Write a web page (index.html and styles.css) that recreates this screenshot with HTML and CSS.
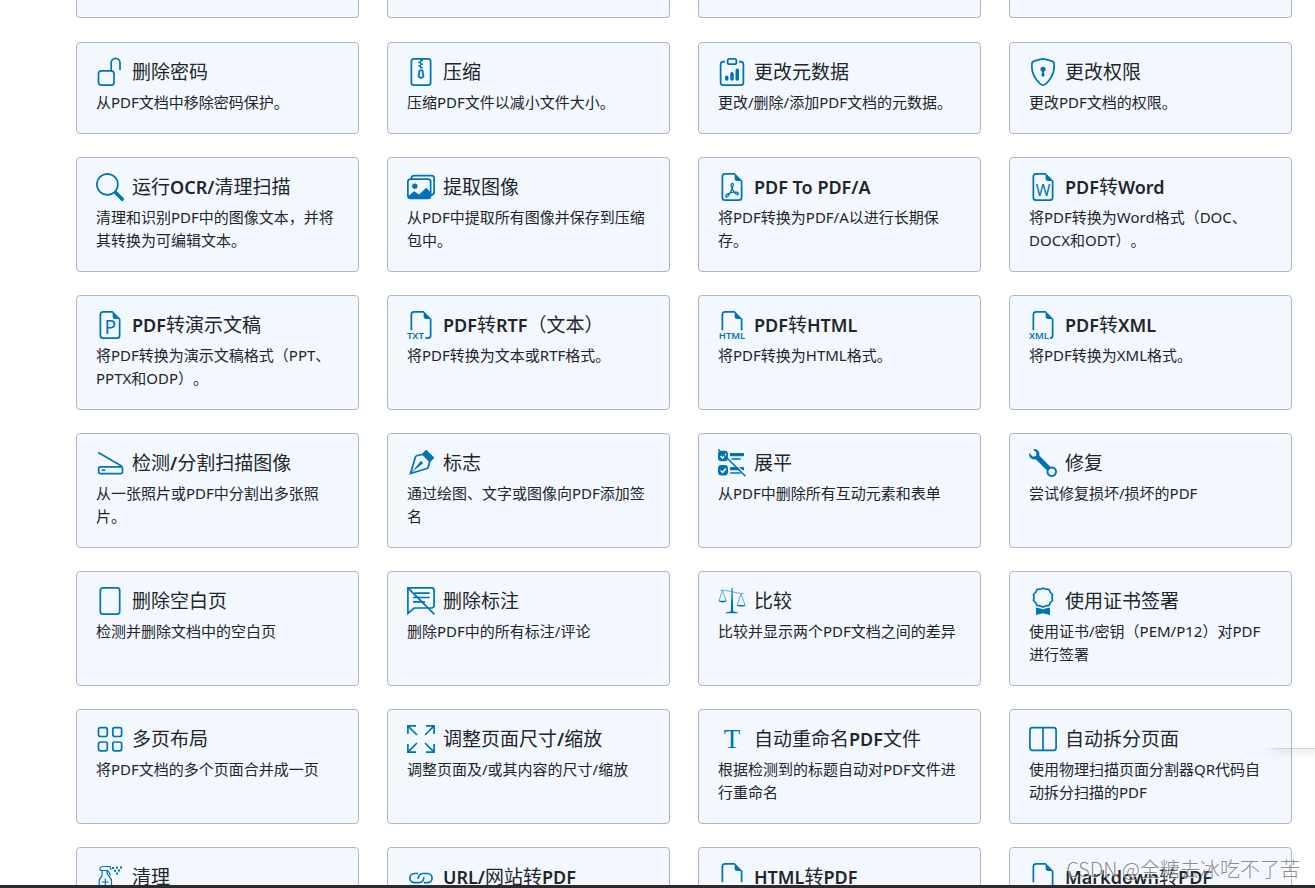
FILE: index.html
```
<!DOCTYPE html>
<html lang="zh-CN">
<head>
<meta charset="utf-8">
<meta name="viewport" content="width=device-width, initial-scale=1">
<title>PDF 工具</title>
<link rel="stylesheet" href="styles.css">
</head>
<body>
<svg class="sprite" aria-hidden="true">
  <symbol id="earmark" viewBox="0 0 16 16"><path d="M14 14V4.5L9.5 0H4a2 2 0 0 0-2 2v12a2 2 0 0 0 2 2h8a2 2 0 0 0 2-2M9.5 3A1.5 1.5 0 0 0 11 4.5h2V14a1 1 0 0 1-1 1H4a1 1 0 0 1-1-1V2a1 1 0 0 1 1-1h5.5z"/></symbol>
  <symbol id="filetype" viewBox="0 0 16 16"><path d="M14 4.5V14a2 2 0 0 1-2 2h-1.500v-1H12a1 1 0 0 0 1-1V4.5h-2A1.5 1.5 0 0 1 9.5 3V1H4a1 1 0 0 0-1 1v9H2V2a2 2 0 0 1 2-2h5.5z"/></symbol>
  <symbol id="filetype-xml" viewBox="0 0 16 16"><path d="M14 4.5V14a2 2 0 0 1-2 2v-1a1 1 0 0 0 1-1V4.5h-2A1.5 1.5 0 0 1 9.5 3V1H4a1 1 0 0 0-1 1v9H2V2a2 2 0 0 1 2-2h5.5z"/></symbol>
  <symbol id="filetype-wide" viewBox="0 0 16 16"><path d="M14 4.5V11h-1V4.5h-2A1.5 1.5 0 0 1 9.5 3V1H4a1 1 0 0 0-1 1v9H2V2a2 2 0 0 1 2-2h5.5z"/></symbol>
</svg>
<main class="page">
  <div class="features peek" aria-hidden="true">
    <div class="stub"></div><div class="stub"></div><div class="stub"></div><div class="stub"></div>
  </div>
  <div class="features">

    <a class="card" href="#">
      <div class="head"><svg class="icon line" viewBox="0 0 28 28"><rect x="2.5" y="12.8" width="15.5" height="14.4" rx="3"/><path d="M15.2 12.8V4.8a4.4 4.4 0 0 1 8.8 0V12"/></svg><h2>删除密码</h2></div>
      <p>从PDF文档中移除密码保护。</p>
    </a>
    <a class="card" href="#">
      <div class="head"><svg class="icon" viewBox="0 0 16 16"><path d="M6.5 7.5a1 1 0 0 1 1-1h1a1 1 0 0 1 1 1v.938l.4 1.599a1 1 0 0 1-.416 1.074l-.93.62a1 1 0 0 1-1.109 0l-.93-.62a1 1 0 0 1-.415-1.074l.4-1.599zm2 0h-1v.938a1 1 0 0 1-.03.243l-.4 1.598.93.62.93-.62-.4-1.598a1 1 0 0 1-.03-.243z"/><path d="M2 2a2 2 0 0 1 2-2h8a2 2 0 0 1 2 2v12a2 2 0 0 1-2 2H4a2 2 0 0 1-2-2zm5.500-1H4a1 1 0 0 0-1 1v12a1 1 0 0 0 1 1h8a1 1 0 0 0 1-1V2a1 1 0 0 0-1-1H9v1H8v1h1v1H8v1h1v1H7.500V5h-1V4h1V3h-1V2h1z"/></svg><h2>压缩</h2></div>
      <p>压缩PDF文件以减小文件大小。</p>
    </a>
    <a class="card" href="#">
      <div class="head"><svg class="icon" viewBox="0 0 16 16"><path d="M4 11a1 1 0 1 1 2 0v1a1 1 0 1 1-2 0zm6-4a1 1 0 1 1 2 0v5a1 1 0 1 1-2 0zM7 9a1 1 0 0 1 2 0v3a1 1 0 1 1-2 0z"/><path d="M4 1.500H3a2 2 0 0 0-2 2V14a2 2 0 0 0 2 2h10a2 2 0 0 0 2-2V3.500a2 2 0 0 0-2-2h-1v1h1a1 1 0 0 1 1 1V14a1 1 0 0 1-1 1H3a1 1 0 0 1-1-1V3.500a1 1 0 0 1 1-1h1z"/><path d="M9.500 1a.5.5 0 0 1 .5.5v1a.5.5 0 0 1-.5.5h-3a.5.5 0 0 1-.5-.5v-1a.5.5 0 0 1 .5-.5zm-3-1A1.500 1.500 0 0 0 5 1.500v1A1.500 1.500 0 0 0 6.500 4h3A1.500 1.500 0 0 0 11 2.500v-1A1.500 1.500 0 0 0 9.500 0z"/></svg><h2>更改元数据</h2></div>
      <p>更改/删除/添加PDF文档的元数据。</p>
    </a>
    <a class="card" href="#">
      <div class="head"><svg class="icon" viewBox="0 0 16 16"><path class="outline" d="M8 .55c1.200 0 4 .9 5.700 1.500.3.1.5.3.55.65.6 4.300-.8 7.500-2.400 9.600C10.400 14.200 8.800 15.500 8 15.500s-2.400-1.300-3.850-3.200c-1.600-2.100-3-5.300-2.400-9.600.05-.35.25-.55.55-.65C4 1.450 6.800.55 8 .55z"/><path d="M9.500 6.500a1.500 1.500 0 0 1-1 1.415l.385 1.990a.5.5 0 0 1-.491.595h-.788a.5.5 0 0 1-.49-.595l.384-1.990a1.500 1.500 0 1 1 2-1.415"/></svg><h2>更改权限</h2></div>
      <p>更改PDF文档的权限。</p>
    </a>

    <a class="card" href="#">
      <div class="head"><svg class="icon" viewBox="0 0 16 16"><path d="M11.742 10.344a6.500 6.500 0 1 0-1.397 1.398h-.001q.044.06.098.115l3.850 3.850a1 1 0 0 0 1.415-1.414l-3.850-3.850a1 1 0 0 0-.115-.1zM12 6.500a5.500 5.500 0 1 1-11 0 5.500 5.500 0 0 1 11 0"/></svg><h2>运行<b>OCR/</b>清理扫描</h2></div>
      <p>清理和识别PDF中的图像文本，并将其转换为可编辑文本。</p>
    </a>
    <a class="card" href="#">
      <div class="head"><svg class="icon" viewBox="0 0 16 16"><path d="M4.502 9a1.500 1.500 0 1 0 0-3 1.500 1.500 0 0 0 0 3"/><path d="M14.002 13a2 2 0 0 1-2 2h-10a2 2 0 0 1-2-2V5A2 2 0 0 1 2 3a2 2 0 0 1 2-2h10a2 2 0 0 1 2 2v8a2 2 0 0 1-1.998 2M14 2H4a1 1 0 0 0-1 1h9.002a2 2 0 0 1 2 2v7A1 1 0 0 0 15 11V3a1 1 0 0 0-1-1M2.002 4a1 1 0 0 0-1 1v8l2.646-2.354a.5.5 0 0 1 .63-.062l2.660 1.773 3.710-3.710a.5.5 0 0 1 .577-.094l1.777 1.947V5a1 1 0 0 0-1-1z"/></svg><h2>提取图像</h2></div>
      <p>从PDF中提取所有图像并保存到压缩包中。</p>
    </a>
    <a class="card" href="#">
      <div class="head"><svg class="icon" viewBox="0 0 16 16"><use href="#earmark"/><path d="M4.603 14.087a.8.8 0 0 1-.438-.42c-.195-.388-.13-.776.08-1.102.198-.307.526-.568.897-.787a7.700 7.700 0 0 1 1.482-.645 20 20 0 0 0 1.062-2.227 7.300 7.300 0 0 1-.43-1.295c-.086-.4-.119-.796-.046-1.136.075-.354.274-.672.65-.823.192-.077.4-.12.602-.077a.7.7 0 0 1 .477.365c.088.164.12.356.127.538.007.188-.012.396-.047.614-.084.51-.27 1.134-.52 1.794a11 11 0 0 0 .98 1.686 5.800 5.800 0 0 1 1.334.05c.364.066.734.195.96.465.12.144.193.32.2.518.007.192-.047.382-.138.563a1.040 1.040 0 0 1-.354.416.86.86 0 0 1-.51.138c-.331-.014-.654-.196-.933-.417a5.700 5.700 0 0 1-.911-.95 11.700 11.700 0 0 0-1.997.406 11.300 11.300 0 0 1-1.020 1.510c-.292.35-.609.656-.927.787a.8.8 0 0 1-.58.029m1.379-1.901q-.25.115-.459.238c-.328.194-.541.383-.647.547-.094.145-.096.25-.04.361q.016.032.026.044l.035-.012c.137-.056.355-.235.635-.572a8 8 0 0 0 .45-.606m1.640-1.330a13 13 0 0 1 1.010-.193 12 12 0 0 1-.51-.858 21 21 0 0 1-.5 1.050zm2.446.45q.226.245.435.41c.24.19.407.253.498.256a.1.1 0 0 0 .07-.015.3.3 0 0 0 .094-.125.44.44 0 0 0 .059-.2.1.1 0 0 0-.026-.063c-.052-.062-.2-.152-.518-.209a4 4 0 0 0-.612-.053zM8.078 7.800a7 7 0 0 0 .2-.828q.046-.282.038-.465a.6.6 0 0 0-.032-.198.5.5 0 0 0-.145.04c-.087.035-.158.106-.196.283-.04.192-.03.469.046.822q.036.167.09.346z"/></svg><h2><b>PDF To PDF/A</b></h2></div>
      <p>将PDF转换为PDF/A以进行长期保存。</p>
    </a>
    <a class="card" href="#">
      <div class="head"><svg class="icon" viewBox="0 0 16 16"><use href="#earmark"/><text class="letter" x="8" y="13.4" text-anchor="middle">W</text></svg><h2><b>PDF</b>转<b>Word</b></h2></div>
      <p>将PDF转换为Word格式（DOC、DOCX和ODT）。</p>
    </a>

    <a class="card" href="#">
      <div class="head"><svg class="icon" viewBox="0 0 16 16"><use href="#earmark"/><text class="letter tall" x="8.2" y="13.4" text-anchor="middle">P</text></svg><h2><b>PDF</b>转演示文稿</h2></div>
      <p>将PDF转换为演示文稿格式（PPT、PPTX和ODP）。</p>
    </a>
    <a class="card" href="#">
      <div class="head"><svg class="icon" viewBox="0 0 16 16"><use href="#filetype"/><text class="label" x="0" y="15.900">TXT</text></svg><h2><b>PDF</b>转<b>RTF</b>（文本）</h2></div>
      <p>将PDF转换为文本或RTF格式。</p>
    </a>
    <a class="card" href="#">
      <div class="head"><svg class="icon" viewBox="0 0 16 16"><use href="#filetype-wide"/><text class="label" x="8" y="15.900" text-anchor="middle">HTML</text></svg><h2><b>PDF</b>转<b>HTML</b></h2></div>
      <p>将PDF转换为HTML格式。</p>
    </a>
    <a class="card" href="#">
      <div class="head"><svg class="icon" viewBox="0 0 16 16"><use href="#filetype-xml"/><text class="label" x="0" y="15.900">XML</text></svg><h2><b>PDF</b>转<b>XML</b></h2></div>
      <p>将PDF转换为XML格式。</p>
    </a>

    <a class="card" href="#">
      <div class="head"><svg class="icon line" viewBox="0 0 28 28"><path d="M2.200 3.600L26 17.200"/><rect x="2.700" y="17.800" width="23.800" height="6.800" rx="1.600"/><path d="M5.800 21.200h3.400"/></svg><h2>检测<b>/</b>分割扫描图像</h2></div>
      <p>从一张照片或PDF中分割出多张照片。</p>
    </a>
    <a class="card" href="#">
      <div class="head"><svg class="icon" viewBox="0 0 16 16"><path d="M10.646.646a.5.5 0 0 1 .708 0l4 4a.5.5 0 0 1 0 .708l-1.902 1.902-.829 3.313a1.500 1.500 0 0 1-1.024 1.073L1.254 14.746 4.358 4.400A1.500 1.500 0 0 1 5.430 3.377l3.313-.828zm-1.800 2.908-3.173.793a.5.5 0 0 0-.358.342l-2.570 8.565 8.567-2.570a.5.5 0 0 0 .34-.357l.794-3.174z"/><path d="M2.832 13.228 8 9a1 1 0 1 0-1-1l-4.228 5.168-.026.086z"/></svg><h2>标志</h2></div>
      <p>通过绘图、文字或图像向PDF添加签名</p>
    </a>
    <a class="card" href="#">
      <div class="head"><svg class="icon" viewBox="0 0 28 28"><rect x="0" y="1.700" width="10" height="10.500" rx="3.400"/><rect x="0" y="16" width="10" height="10.500" rx="3.400"/><path class="tick" d="M2.600 7.200l2 1.900 3.300-4M2.600 21.500l2 1.900 3.300-4"/><rect x="12" y="4" width="14" height="3.300" rx=".8"/><rect x="13" y="9.300" width="10" height="1.500" rx=".7"/><rect x="12" y="18" width="14" height="3.300" rx=".8"/><rect x="12" y="23.300" width="11" height="1.500" rx=".7"/><path class="gap" d="M10 7.800L28 25.600"/><path class="outline-px" d="M.3.5L27.500 27.300"/></svg><h2>展平</h2></div>
      <p>从PDF中删除所有互动元素和表单</p>
    </a>
    <a class="card" href="#">
      <div class="head"><svg class="icon" viewBox="0 0 16 16"><path d="M.102 2.223A3.004 3.004 0 0 0 3.780 5.897l6.341 6.252A3.003 3.003 0 0 0 13 16a3 3 0 1 0-.851-5.878L5.897 3.781A3.004 3.004 0 0 0 2.223.1l2.141 2.142L4 4l-1.757.364zm13.370 9.019.528.026.287.445.445.287.026.529L15 13l-.242.471-.026.529-.445.287-.287.445-.529.026L13 15l-.471-.242-.529-.026-.287-.445-.445-.287-.026-.529L11 13l.242-.471.026-.529.445-.287.287-.445.529-.026L13 11z"/></svg><h2>修复</h2></div>
      <p>尝试修复损坏/损坏的PDF</p>
    </a>

    <a class="card" href="#">
      <div class="head"><svg class="icon line" viewBox="0 0 28 28"><rect x="4.300" y=".9" width="19.400" height="26.200" rx="2.600"/></svg><h2>删除空白页</h2></div>
      <p>检测并删除文档中的空白页</p>
    </a>
    <a class="card" href="#">
      <div class="head"><svg class="icon line" viewBox="0 0 28 28"><path d="M.9.900H24.600a2.500 2.500 0 0 1 2.500 2.500V18.500a2.500 2.500 0 0 1-2.500 2.500H7.200L.9 26.300zM7.500 6.200h15.200M6 10.500h16.700M6 14.800h12M.9.900l26.500 26.500"/></svg><h2>删除标注</h2></div>
      <p>删除PDF中的所有标注/评论</p>
    </a>
    <a class="card" href="#">
      <div class="head"><svg class="icon thin" viewBox="0 0 28 28"><path d="M2.500 3.400C8 2.200 18 6.800 25.600 6.400"/><path d="M4.500 3.500L.9 14M4.500 3.500L8.300 14M23 7l-3.800 11M23 7l4 11"/><path class="solid" d="M.5 13.800h8.300c-.5 2.100-7.800 2.100-8.300 0zM18.800 18h8.800c-.5 2.100-8.300 2.100-8.800 0zM13.600 2.500a.8.800 0 1 1 1 0L15.300 24.500c2 .3 4.600.5 4.900 1.700H7.500c.3-1.200 3-1.400 5.300-1.700z"/></svg><h2>比较</h2></div>
      <p>比较并显示两个PDF文档之间的差异</p>
    </a>
    <a class="card" href="#">
      <div class="head"><svg class="icon line" viewBox="0 0 28 28"><path d="M14 1.200l2.900 1 3.100.3 1.300 2.800 2.200 2.200-.5 3 .5 3-2.200 2.200-1.300 2.700-3.100.4-2.900 1.200-2.900-1.200-3.100-.4-1.300-2.700-2.200-2.200.5-3-.5-3 2.200-2.200L8 2.500l3.100-.3z"/><path class="solid" d="M7 20.500l4.500 1.100 2.500 1 2.500-1 4.500-1.100V28l-7-1.800L7 28z"/></svg><h2>使用证书签署</h2></div>
      <p>使用证书/密钥（PEM/P12）对PDF进行签署</p>
    </a>

    <a class="card" href="#">
      <div class="head"><svg class="icon line" viewBox="0 0 28 28"><rect x="2.500" y="2.700" width="8.800" height="8.800" rx="2"/><rect x="16.800" y="2.700" width="8.800" height="8.800" rx="2"/><rect x="2.500" y="17" width="8.800" height="8.800" rx="2"/><rect x="16.800" y="17" width="8.800" height="8.800" rx="2"/></svg><h2>多页布局</h2></div>
      <p>将PDF文档的多个页面合并成一页</p>
    </a>
    <a class="card" href="#">
      <div class="head"><svg class="icon line" viewBox="0 0 28 28"><path d="M9 .9H.9V9M.9.900L10 10M19 .9h8.100V9M27.100.900L18 10M9 27.100H.9V19M.9 27.100L10 18M19 27.100h8.100V19M27.100 27.100L18 18"/></svg><h2>调整页面尺寸<b>/</b>缩放</h2></div>
      <p>调整页面及/或其内容的尺寸/缩放</p>
    </a>
    <a class="card" href="#">
      <div class="head"><svg class="icon" viewBox="0 0 28 28"><text class="serif" x="14" y="23" text-anchor="middle">T</text></svg><h2>自动重命名<b>PDF</b>文件</h2></div>
      <p>根据检测到的标题自动对PDF文件进行重命名</p>
    </a>
    <a class="card" href="#">
      <div class="head"><svg class="icon line" viewBox="0 0 28 28"><rect x=".9" y="2.600" width="26.200" height="22.800" rx="2.600"/><path d="M14 2.600v22.800"/></svg><h2>自动拆分页面</h2></div>
      <p>使用物理扫描页面分割器QR代码自动拆分扫描的PDF</p>
    </a>

    <a class="card" href="#">
      <div class="head"><svg class="icon spray" viewBox="0 0 28 28"><path d="M4 7.500V5.200C4.500 4 6 3.500 8 3.500h6l1.200 3.200M4 7.500h7.500c1.500 1.300 2.500 3 3 5M6 7.500V13c-1.300 1.500-2.800 2.600-2.800 5v9.500h12.300V18c0-2.400-1.500-3.500-2.800-5M11 7.500V10l1.700 3M9.300 15.500v7M5.800 19h7"/><path class="solid" d="M16 4h2v2h-2zM20 3.500h2v2h-2zM24 3.500h2v2h-2zM18 6.800h2v2h-2zM22 6.500h2v2h-2zM20 9.500h2v2h-2z"/></svg><h2>清理</h2></div>
    </a>
    <a class="card" href="#">
      <div class="head"><svg class="icon line" viewBox="0 0 28 28"><path d="M11 10.500H7.500a4.600 4.600 0 0 0 0 9.200h4.700a4.600 4.600 0 0 0 4.500-5.500M17 19.700h3.500a4.600 4.600 0 0 0 0-9.200h-4.700a4.600 4.600 0 0 0-4.500 5.500"/></svg><h2><b>URL/</b>网站转<b>PDF</b></h2></div>
    </a>
    <a class="card" href="#">
      <div class="head"><svg class="icon" viewBox="0 0 16 16"><use href="#filetype-wide"/><text class="label" x="8" y="15.900" text-anchor="middle">HTML</text></svg><h2><b>HTML</b>转<b>PDF</b></h2></div>
    </a>
    <a class="card" href="#">
      <div class="head"><svg class="icon" viewBox="0 0 16 16"><use href="#filetype"/><text class="label" x="0" y="15.900">MD</text></svg><h2><b>Markdown</b>转<b>PDF</b></h2></div>
    </a>
  </div>
  <div class="edge-shadow"></div>
  <div class="watermark">CSDN @全糖去冰吃不了苦</div>
  <div class="bottom-bar"></div>
</main>
</body>
</html>
```
FILE: styles.css
```
* {
  box-sizing: border-box;
}

body {
  margin: 0;
  background: #fff;
  color: #212529;
  font: 15px/23px "Noto Sans", "Noto Sans CJK SC", sans-serif;
  text-spacing-trim: space-all;
}

.sprite {
  display: none;
}

.page {
  position: relative;
  height: 100vh;
  overflow: hidden;
}

.features {
  display: grid;
  grid-template-columns: repeat(4, minmax(0, 1fr));
  gap: 23px 28px;
  padding: 0 23px 0 76px;
}

.peek {
  margin-bottom: 24px;
}

.stub {
  height: 18px;
  border: 1px solid #b0b6c3;
  border-top: 0;
  border-radius: 0 0 4px 4px;
  background: #f3f8ff;
}

.card {
  min-height: 92px;
  padding: 15px 19px 19px;
  border: 1px solid #b0b6c3;
  border-radius: 4px;
  background: #f3f8ff;
  color: inherit;
  text-decoration: none;
}

.head {
  display: flex;
  align-items: center;
  gap: 8px;
  height: 28px;
  margin-bottom: 5px;
}

.head h2 {
  margin: 0;
  font-size: 19px;
  line-height: 28px;
  font-weight: 400;
  white-space: nowrap;
}

.head b {
  font-size: 18px;
  font-weight: 600;
}

.card p {
  margin: 0;
}

.icon {
  flex: none;
  width: 28px;
  height: 28px;
  fill: #0073b7;
  overflow: visible;
}

.line {
  fill: none;
  stroke: #0073b7;
  stroke-width: 1.7;
}

.thin,
.spray {
  fill: none;
  stroke: #0073b7;
  stroke-width: 0.6;
}

.spray {
  stroke-width: 1.2;
}

.solid {
  fill: #0073b7;
  stroke: none;
}

.outline {
  fill: none;
  stroke: #0073b7;
  stroke-width: 1;
}

.outline-px {
  stroke: #0073b7;
  stroke-width: 1.6;
}

.gap {
  stroke: #f3f8ff;
  stroke-width: 1.2;
}

.tick {
  fill: none;
  stroke: #f3f8ff;
  stroke-width: 1.6;
}

.letter {
  font: 400 9px "Noto Sans", sans-serif;
}

.letter.tall {
  font-size: 11px;
}

.label {
  font: 600 5.4px "Noto Sans", sans-serif;
}

.serif {
  font: 27px "Liberation Serif", serif;
}

.edge-shadow {
  position: absolute;
  right: 0;
  top: 748px;
  width: 53px;
  height: 12px;
  border-top: 1px solid rgba(0, 0, 0, 0.16);
  background: linear-gradient(rgba(0, 0, 0, 0.06), transparent);
  -webkit-mask-image: linear-gradient(90deg, transparent, #000 40%);
  mask-image: linear-gradient(90deg, transparent, #000 40%);
}

.watermark {
  position: absolute;
  right: 15px;
  bottom: 4px;
  color: rgba(110, 110, 115, 0.8);
  font: 300 20px/30px "Noto Sans CJK SC", sans-serif;
  text-shadow: 1px 1px 0 rgba(255, 255, 255, 0.7);
}

.bottom-bar {
  position: absolute;
  inset: auto 0 0;
  height: 3px;
  background: #2b2b2f;
}
```
